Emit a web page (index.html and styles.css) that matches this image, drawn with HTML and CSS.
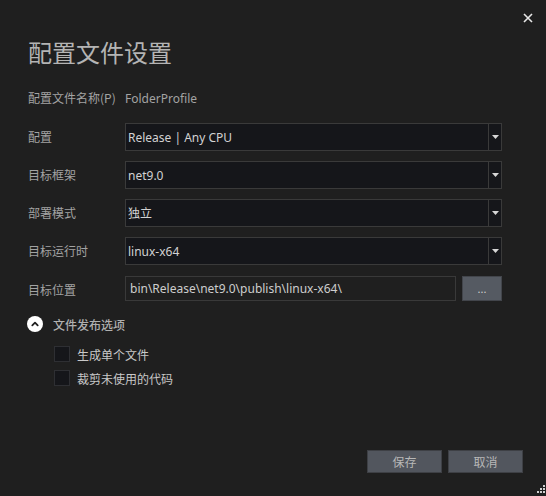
FILE: index.html
```html
<!DOCTYPE html>
<html lang="zh-CN">
<head>
<meta charset="utf-8">
<title>配置文件设置</title>
<link rel="stylesheet" href="styles.css">
</head>
<body>
<div class="dialog">
  <div class="titlebar">
    <button class="close" aria-label="关闭">
      <svg width="10" height="10" viewBox="0 0 10 10"><path d="M1 1L9 9M9 1L1 9" stroke="#e8e8e8" stroke-width="1.6" fill="none"/></svg>
    </button>
  </div>
  <div class="content">
    <h1 class="title">配置文件设置</h1>
    <div class="name-row">
      <span class="label">配置文件名称(P)</span>
      <span class="name-value">FolderProfile</span>
    </div>
    <div class="form">
      <span class="label">配置</span>
      <div class="select"><span class="select-text">Release | Any CPU</span><span class="select-btn"><svg width="7" height="4" viewBox="0 0 7 4"><path d="M0 0H7L3.5 4Z" fill="#d6d6d6"/></svg></span></div>
      <span class="label">目标框架</span>
      <div class="select"><span class="select-text">net9.0</span><span class="select-btn"><svg width="7" height="4" viewBox="0 0 7 4"><path d="M0 0H7L3.5 4Z" fill="#d6d6d6"/></svg></span></div>
      <span class="label">部署模式</span>
      <div class="select"><span class="select-text">独立</span><span class="select-btn"><svg width="7" height="4" viewBox="0 0 7 4"><path d="M0 0H7L3.5 4Z" fill="#d6d6d6"/></svg></span></div>
      <span class="label">目标运行时</span>
      <div class="select"><span class="select-text">linux-x64</span><span class="select-btn"><svg width="7" height="4" viewBox="0 0 7 4"><path d="M0 0H7L3.5 4Z" fill="#d6d6d6"/></svg></span></div>
      <span class="label label-path">目标位置</span>
      <div class="path-row">
        <div class="path-input">bin\Release\net9.0\publish\linux-x64\</div>
        <button class="browse">...</button>
      </div>
    </div>
    <div class="expander">
      <span class="chevron"><svg width="16" height="16" viewBox="0 0 16 16"><circle cx="8" cy="8" r="8" fill="#ffffff"/><path d="M5.3 9.4L8 6.7L10.7 9.4" stroke="#1f1f1f" stroke-width="1.8" fill="none" stroke-linecap="round" stroke-linejoin="round"/></svg></span>
      <span class="expander-text">文件发布选项</span>
    </div>
    <div class="options">
      <label class="check"><span class="box"></span><span>生成单个文件</span></label>
      <label class="check"><span class="box"></span><span>裁剪未使用的代码</span></label>
    </div>
  </div>
  <div class="footer">
    <button class="btn">保存</button>
    <button class="btn">取消</button>
  </div>
  <div class="grip">
    <svg width="10" height="10" viewBox="0 0 10 10" fill="#cfcfcf">
      <rect x="8" y="0" width="2" height="2"/>
      <rect x="5" y="3" width="2" height="2"/><rect x="8" y="3" width="2" height="2"/>
      <rect x="2" y="6" width="2" height="2"/><rect x="5" y="6" width="2" height="2"/><rect x="8" y="6" width="2" height="2"/>
    </svg>
  </div>
</div>
</body>
</html>
```
FILE: styles.css
```css
html, body {
  margin: 0;
  padding: 0;
  background: #1f1f1f;
}
body {
  font-family: "Noto Sans", "Noto Sans CJK SC", sans-serif;
  font-size: 12px;
  color: #a6a6a6;
}
.dialog {
  position: relative;
  width: 546px;
  height: 496px;
  display: flex;
  flex-direction: column;
  box-sizing: border-box;
}
.titlebar {
  height: 36px;
  display: flex;
  justify-content: flex-end;
  align-items: flex-start;
  padding: 13px 13px 0 0;
  box-sizing: border-box;
}
.close {
  width: 10px;
  height: 10px;
  padding: 0;
  border: 0;
  background: transparent;
  display: flex;
}
.content {
  padding: 0 44px 0 28px;
  display: flex;
  flex-direction: column;
}
.title {
  margin: 0;
  font-family: "Noto Sans CJK SC", sans-serif;
  font-weight: 400;
  font-size: 24px;
  line-height: 32px;
  color: #b4b4b4;
}
.name-row {
  margin-top: 20px;
  height: 20px;
  display: flex;
  align-items: center;
}
.name-row .label {
  width: 97px;
  flex: none;
}
.name-value {
  color: #a3a3a3;
}
.label {
  font-family: "Noto Sans CJK SC", sans-serif;
  color: #a3a3a3;
  font-size: 12px;
  line-height: 16px;
  align-self: center;
}
.form {
  margin-top: 15px;
  display: grid;
  grid-template-columns: 97px 1fr;
  grid-auto-rows: 28px;
  row-gap: 10px;
}
.form .label-path {
  margin-top: 1px;
}
.select {
  display: flex;
  height: 28px;
  box-sizing: border-box;
  border: 1px solid #3a3a3a;
  background: #15161a;
}
.select-text {
  flex: 1;
  padding-left: 2px;
  display: flex;
  align-items: center;
  color: #d2d2d2;
  font-family: "Noto Sans", "Noto Sans CJK SC", sans-serif;
  font-size: 12px;
}
.select-btn {
  width: 12px;
  border-left: 1px solid #3a3a3a;
  display: flex;
  align-items: center;
  justify-content: center;
}
.path-row {
  margin-top: 1px;
  height: 25px;
  display: flex;
  gap: 6px;
}
.path-input {
  flex: 1;
  box-sizing: border-box;
  border: 1px solid #393939;
  background: #1f1f1f;
  padding-left: 4px;
  display: flex;
  align-items: center;
  color: #cdcdcd;
  font-size: 12px;
}
.browse {
  width: 40px;
  height: 25px;
  box-sizing: border-box;
  border: 1px solid #42454b;
  background: #555a62;
  color: #cfcfcf;
  font-family: "Noto Sans", sans-serif;
  font-size: 11px;
  padding: 0;
}
.expander {
  margin-top: 13px;
  height: 16px;
  display: flex;
  align-items: center;
}
.chevron {
  width: 16px;
  height: 16px;
  margin-left: -1px;
  display: flex;
}
.expander-text {
  margin-left: 10px;
  font-family: "Noto Sans CJK SC", sans-serif;
  font-weight: 500;
  color: #b0b0b0;
}
.options {
  margin-top: 14px;
  padding-left: 26px;
  display: flex;
  flex-direction: column;
  gap: 8px;
}
.check {
  display: flex;
  align-items: center;
  height: 16px;
  gap: 7px;
  font-family: "Noto Sans CJK SC", sans-serif;
  color: #c8c8c8;
}
.box {
  width: 16px;
  height: 16px;
  box-sizing: border-box;
  border: 1px solid #2e2f33;
  background: #15161a;
}
.footer {
  margin-top: auto;
  padding: 0 23px 23px 0;
  display: flex;
  justify-content: flex-end;
  gap: 6px;
}
.btn {
  width: 75px;
  height: 23px;
  box-sizing: border-box;
  border: 1px solid #3e4045;
  background: #52565e;
  color: #b8b8b8;
  font-family: "Noto Sans CJK SC", sans-serif;
  font-size: 12px;
  padding: 0;
}
.grip {
  position: absolute;
  right: 1px;
  bottom: 1px;
  width: 10px;
  height: 10px;
  display: flex;
}
```
